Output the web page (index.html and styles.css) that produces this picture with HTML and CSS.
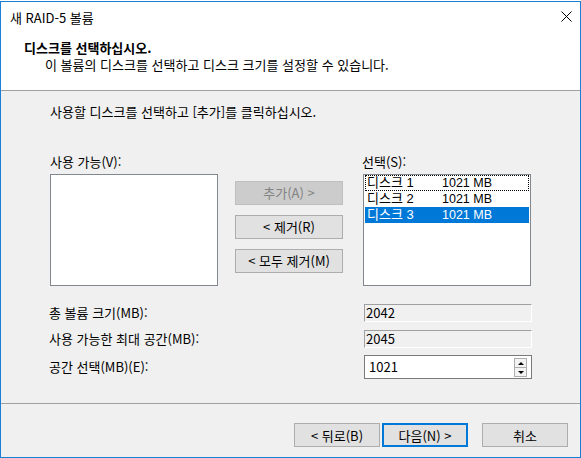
FILE: index.html
```html
<!DOCTYPE html>
<html lang="ko">
<head>
<meta charset="utf-8">
<title>새 RAID-5 볼륨</title>
<link rel="stylesheet" href="styles.css">
</head>
<body>
<div class="window">
  <div class="titlebar">
    <span class="title">새 RAID-5 볼륨</span>
    <svg class="close" width="11" height="11" viewBox="0 0 11 11"><path d="M0.5 0.5L10.5 10.5M10.5 0.5L0.5 10.5" stroke="#000" stroke-width="1" fill="none"/></svg>
  </div>
  <div class="header">
    <div class="h-title">디스크를 선택하십시오.</div>
    <div class="h-sub">이 볼륨의 디스크를 선택하고 디스크 크기를 설정할 수 있습니다.</div>
  </div>
  <div class="content">
    <div class="instr">사용할 디스크를 선택하고 [추가]를 클릭하십시오.</div>
    <div class="pick">
      <div class="col col-left">
        <div class="lbl">사용 가능(V):</div>
        <div class="listbox"></div>
      </div>
      <div class="col col-mid">
        <div class="btn disabled">추가(A) &gt;</div>
        <div class="btn">&lt; 제거(R)</div>
        <div class="btn">&lt; 모두 제거(M)</div>
      </div>
      <div class="col col-right">
        <div class="lbl">선택(S):</div>
        <div class="listbox">
          <div class="row focus"><span class="c1">디스크 1</span><span class="c2">1021 MB</span></div>
          <div class="row"><span class="c1">디스크 2</span><span class="c2">1021 MB</span></div>
          <div class="row sel"><span class="c1">디스크 3</span><span class="c2">1021 MB</span></div>
        </div>
      </div>
    </div>
    <div class="fields">
      <div class="flabel">총 볼륨 크기(MB):</div>
      <div class="ro">2042</div>
      <div class="flabel">사용 가능한 최대 공간(MB):</div>
      <div class="ro">2045</div>
      <div class="flabel">공간 선택(MB)(E):</div>
      <div class="spin">
        <span class="spin-val">1021</span>
        <span class="spin-btns">
          <span class="sb"><i class="up"></i></span>
          <span class="sb"><i class="down"></i></span>
        </span>
      </div>
    </div>
  </div>
  <div class="footer">
    <div class="btn fbtn">&lt; 뒤로(B)</div>
    <div class="btn fbtn default">다음(N) &gt;</div>
    <div class="btn fbtn cancel">취소</div>
  </div>
</div>
</body>
</html>
```
FILE: styles.css
```css
* { box-sizing: border-box; }
html, body { margin: 0; padding: 0; }
body {
  background: #fff;
  padding-top: 1px;
  font-family: "Noto Sans CJK KR", "Malgun Gothic", sans-serif;
  font-size: 13px;
  color: #000;
  width: 581px;
  height: 458px;
  overflow: hidden;
}
.window {
  width: 581px;
  height: 457px;
  border: 1px solid #1a7fd6;
  background: #f0f0f0;
  display: flex;
  flex-direction: column;
}
.titlebar {
  height: 30px;
  flex: none;
  background: #fff;
  display: flex;
  align-items: center;
  justify-content: space-between;
  padding: 1px 8px 0 9px;
  line-height: 16px;
}
.close { display: block; margin-top: -2px; }
.header {
  height: 59px;
  flex: none;
  background: #fff;
  border-bottom: 1px solid #a0a0a0;
  padding: 8px 0 0 23px;
  line-height: 16px;
}
.h-title { font-weight: bold; }
.h-sub { padding-left: 21px; margin-top: 1px; }
.content {
  flex: 1;
  padding: 13px 0 0 49px;
  line-height: 16px;
}
.instr { height: 16px; }
.pick {
  display: flex;
  margin-top: 34px;
}
.col { display: flex; flex-direction: column; }
.lbl { height: 16px; margin-bottom: 4px; }
.col-left { width: 168px; }
.col-mid { width: 108px; margin-left: 17px; padding-top: 27px; gap: 10px; }
.col-right { width: 168px; margin-left: 20px; }
.col-right .lbl { margin-left: -1px; }
.listbox {
  height: 112px;
  background: #fff;
  border: 1px solid #828790;
  padding: 0 1px;
}
.row {
  height: 16px;
  display: flex;
  align-items: center;
  padding-left: 2px;
  white-space: nowrap;
  font-family: "Liberation Sans", "Noto Sans CJK KR", sans-serif;
  line-height: 16px;
}
.row .c1 { width: 75px; flex: none; font-size: 13px; }
.row .c2 { font-size: 12.5px; }
.row.focus { outline: 1px dotted #000; outline-offset: -1px; }
.row.sel { background: #0078d7; color: #fff; }
.btn {
  height: 24px;
  background: #e1e1e1;
  border: 1px solid #adadad;
  display: flex;
  align-items: center;
  justify-content: center;
  white-space: nowrap;
}
.btn.disabled { background: #cccccc; border-color: #bfbfbf; color: #838383; }
.fields {
  display: grid;
  grid-template-columns: 315px 168px;
  grid-template-rows: 18px 18px 24px;
  row-gap: 8px;
  align-items: center;
  margin: 18px 0 0 -1px;
}
.fields > :nth-child(5), .fields > :nth-child(6) { margin-top: -2px; }
.ro {
  height: 18px;
  background: #f0f0f0;
  border-top: 1px solid #a0a0a0;
  border-left: 1px solid #a0a0a0;
  border-bottom: 1px solid #fff;
  border-right: 1px solid #fff;
  padding-left: 1px;
  line-height: 16px;
}
.spin {
  height: 24px;
  background: #fff;
  border: 1px solid #7a7a7a;
  display: flex;
  align-items: stretch;
}
.spin-val { flex: 1; padding-left: 4px; line-height: 22px; }
.spin-btns {
  width: 13px;
  margin: 2px 4px 1px 0;
  display: flex;
  flex-direction: column;
}
.sb {
  flex: 1;
  border: 1px solid #adadad;
  background: #f3f3f3;
  display: flex;
  align-items: center;
  justify-content: center;
}
.sb + .sb { border-top: none; }
.up, .down { display: block; width: 0; height: 0; border-left: 3px solid transparent; border-right: 3px solid transparent; }
.up { border-bottom: 3px solid #000; }
.down { border-top: 3px solid #000; }
.footer {
  height: 54px;
  flex: none;
  border-top: 1px solid #a0a0a0;
  display: flex;
  justify-content: flex-end;
  padding: 19px 12px 0 0;
}
.fbtn { width: 86px; }
.fbtn + .fbtn { margin-left: 2px; }
.fbtn.cancel { margin-left: 14px; }
.fbtn.default { border: 2px solid #0078d7; }
```
